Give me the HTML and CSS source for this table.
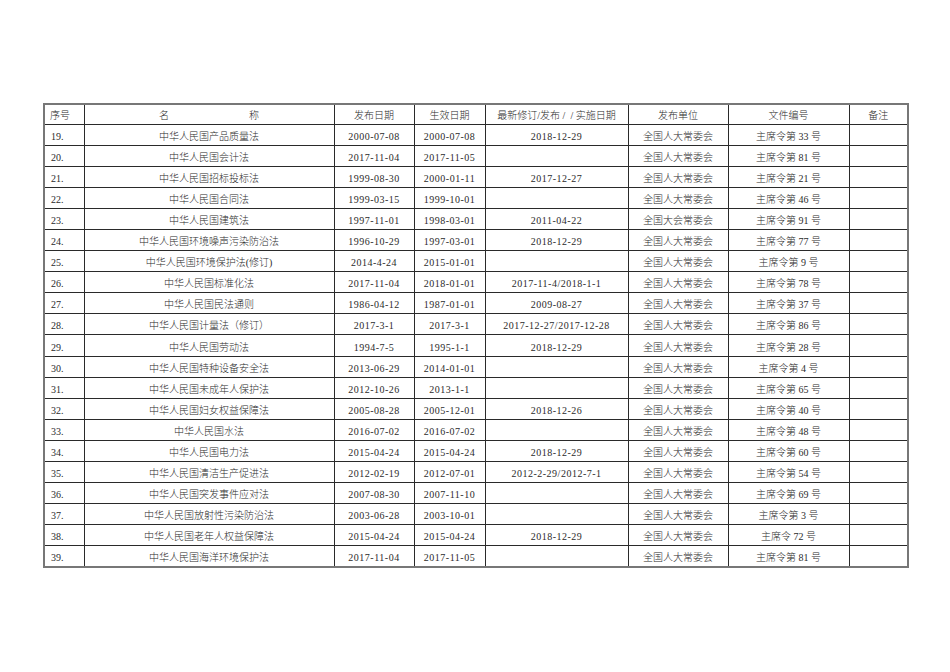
FILE: index.html
```html
<!DOCTYPE html>
<html lang="zh-CN">
<head>
<meta charset="utf-8">
<title>法规清单</title>
<link rel="stylesheet" href="styles.css">
</head>
<body>
<table class="laws">
<colgroup>
<col class="c-no"><col class="c-name"><col class="c-pub"><col class="c-eff"><col class="c-rev"><col class="c-org"><col class="c-doc"><col class="c-note">
</colgroup>
<thead>
<tr><th class="no">序号</th><th><span class="nm">名</span><span class="nm">称</span></th><th>发布日期</th><th>生效日期</th><th>最新修订/发布&nbsp;/&nbsp;&nbsp;/&nbsp;实施日期</th><th>发布单位</th><th>文件编号</th><th>备注</th></tr>
</thead>
<tbody>
<tr><td class="no">19.</td><td>中华人民国产品质量法</td><td class="d">2000-07-08</td><td class="d">2000-07-08</td><td class="d">2018-12-29</td><td>全国人大常委会</td><td>主席令第 33 号</td><td></td></tr>
<tr><td class="no">20.</td><td>中华人民国会计法</td><td class="d">2017-11-04</td><td class="d">2017-11-05</td><td class="d"></td><td>全国人大常委会</td><td>主席令第 81 号</td><td></td></tr>
<tr><td class="no">21.</td><td>中华人民国招标投标法</td><td class="d">1999-08-30</td><td class="d">2000-01-11</td><td class="d">2017-12-27</td><td>全国人大常委会</td><td>主席令第 21 号</td><td></td></tr>
<tr><td class="no">22.</td><td>中华人民国合同法</td><td class="d">1999-03-15</td><td class="d">1999-10-01</td><td class="d"></td><td>全国人大常委会</td><td>主席令第 46 号</td><td></td></tr>
<tr><td class="no">23.</td><td>中华人民国建筑法</td><td class="d">1997-11-01</td><td class="d">1998-03-01</td><td class="d">2011-04-22</td><td>全国大会常委会</td><td>主席令第 91 号</td><td></td></tr>
<tr><td class="no">24.</td><td>中华人民国环境噪声污染防治法</td><td class="d">1996-10-29</td><td class="d">1997-03-01</td><td class="d">2018-12-29</td><td>全国人大常委会</td><td>主席令第 77 号</td><td></td></tr>
<tr><td class="no">25.</td><td>中华人民国环境保护法(修订)</td><td class="d">2014-4-24</td><td class="d">2015-01-01</td><td class="d"></td><td>全国人大常委会</td><td>主席令第 9 号</td><td></td></tr>
<tr><td class="no">26.</td><td>中华人民国标准化法</td><td class="d">2017-11-04</td><td class="d">2018-01-01</td><td class="d">2017-11-4/2018-1-1</td><td>全国人大常委会</td><td>主席令第 78 号</td><td></td></tr>
<tr><td class="no">27.</td><td>中华人民国民法通则</td><td class="d">1986-04-12</td><td class="d">1987-01-01</td><td class="d">2009-08-27</td><td>全国人大常委会</td><td>主席令第 37 号</td><td></td></tr>
<tr><td class="no">28.</td><td>中华人民国计量法（修订）</td><td class="d">2017-3-1</td><td class="d">2017-3-1</td><td class="d">2017-12-27/2017-12-28</td><td>全国人大常委会</td><td>主席令第 86 号</td><td></td></tr>
<tr><td class="no">29.</td><td>中华人民国劳动法</td><td class="d">1994-7-5</td><td class="d">1995-1-1</td><td class="d">2018-12-29</td><td>全国人大常委会</td><td>主席令第 28 号</td><td></td></tr>
<tr><td class="no">30.</td><td>中华人民国特种设备安全法</td><td class="d">2013-06-29</td><td class="d">2014-01-01</td><td class="d"></td><td>全国人大常委会</td><td>主席令第 4 号</td><td></td></tr>
<tr><td class="no">31.</td><td>中华人民国未成年人保护法</td><td class="d">2012-10-26</td><td class="d">2013-1-1</td><td class="d"></td><td>全国人大常委会</td><td>主席令第 65 号</td><td></td></tr>
<tr><td class="no">32.</td><td>中华人民国妇女权益保障法</td><td class="d">2005-08-28</td><td class="d">2005-12-01</td><td class="d">2018-12-26</td><td>全国人大常委会</td><td>主席令第 40 号</td><td></td></tr>
<tr><td class="no">33.</td><td>中华人民国水法</td><td class="d">2016-07-02</td><td class="d">2016-07-02</td><td class="d"></td><td>全国人大常委会</td><td>主席令第 48 号</td><td></td></tr>
<tr><td class="no">34.</td><td>中华人民国电力法</td><td class="d">2015-04-24</td><td class="d">2015-04-24</td><td class="d">2018-12-29</td><td>全国人大常委会</td><td>主席令第 60 号</td><td></td></tr>
<tr><td class="no">35.</td><td>中华人民国清洁生产促进法</td><td class="d">2012-02-19</td><td class="d">2012-07-01</td><td class="d">2012-2-29/2012-7-1</td><td>全国人大常委会</td><td>主席令第 54 号</td><td></td></tr>
<tr><td class="no">36.</td><td>中华人民国突发事件应对法</td><td class="d">2007-08-30</td><td class="d">2007-11-10</td><td class="d"></td><td>全国人大常委会</td><td>主席令第 69 号</td><td></td></tr>
<tr><td class="no">37.</td><td>中华人民国放射性污染防治法</td><td class="d">2003-06-28</td><td class="d">2003-10-01</td><td class="d"></td><td>全国人大常委会</td><td>主席令第 3 号</td><td></td></tr>
<tr><td class="no">38.</td><td>中华人民国老年人权益保障法</td><td class="d">2015-04-24</td><td class="d">2015-04-24</td><td class="d">2018-12-29</td><td>全国人大常委会</td><td>主席令 72 号</td><td></td></tr>
<tr><td class="no">39.</td><td>中华人民国海洋环境保护法</td><td class="d">2017-11-04</td><td class="d">2017-11-05</td><td class="d"></td><td>全国人大常委会</td><td>主席令第 81 号</td><td></td></tr>
</tbody>
</table>
</body>
</html>
```
FILE: styles.css
```css
html, body {
  margin: 0;
  padding: 0;
  background: #fff;
}
body {
  padding: 103px 0 0 43px;
  font-family: "Liberation Serif", "Noto Sans CJK SC", serif;
  font-size: 10px;
  font-weight: 300;
  color: #2b2b2b;
}
.laws {
  border-collapse: collapse;
  table-layout: fixed;
  width: 864px;
  border: 2px solid #777;
}
.c-no { width: 40px; }
.c-name { width: 250px; }
.c-pub { width: 80px; }
.c-eff { width: 71px; }
.c-rev { width: 143px; }
.c-org { width: 100px; }
.c-doc { width: 121px; }
.c-note { width: 59px; }
.laws th,
.laws td {
  border: 1px solid #2a2a2a;
  padding: 0 0 2px 0;
  text-align: center;
  vertical-align: bottom;
  font-weight: 300;
  line-height: 12px;
  white-space: nowrap;
  overflow: hidden;
}
.laws thead tr { height: 20px; }
.laws tbody tr { height: 21.1px; }
.laws th.no,
.laws td.no {
  text-align: left;
  padding-left: 6px;
}
.laws th.no { padding-left: 5px; }
.d { letter-spacing: 0.5px; }
.nm { display: inline-block; }
.nm + .nm { margin-left: 80px; }
```
